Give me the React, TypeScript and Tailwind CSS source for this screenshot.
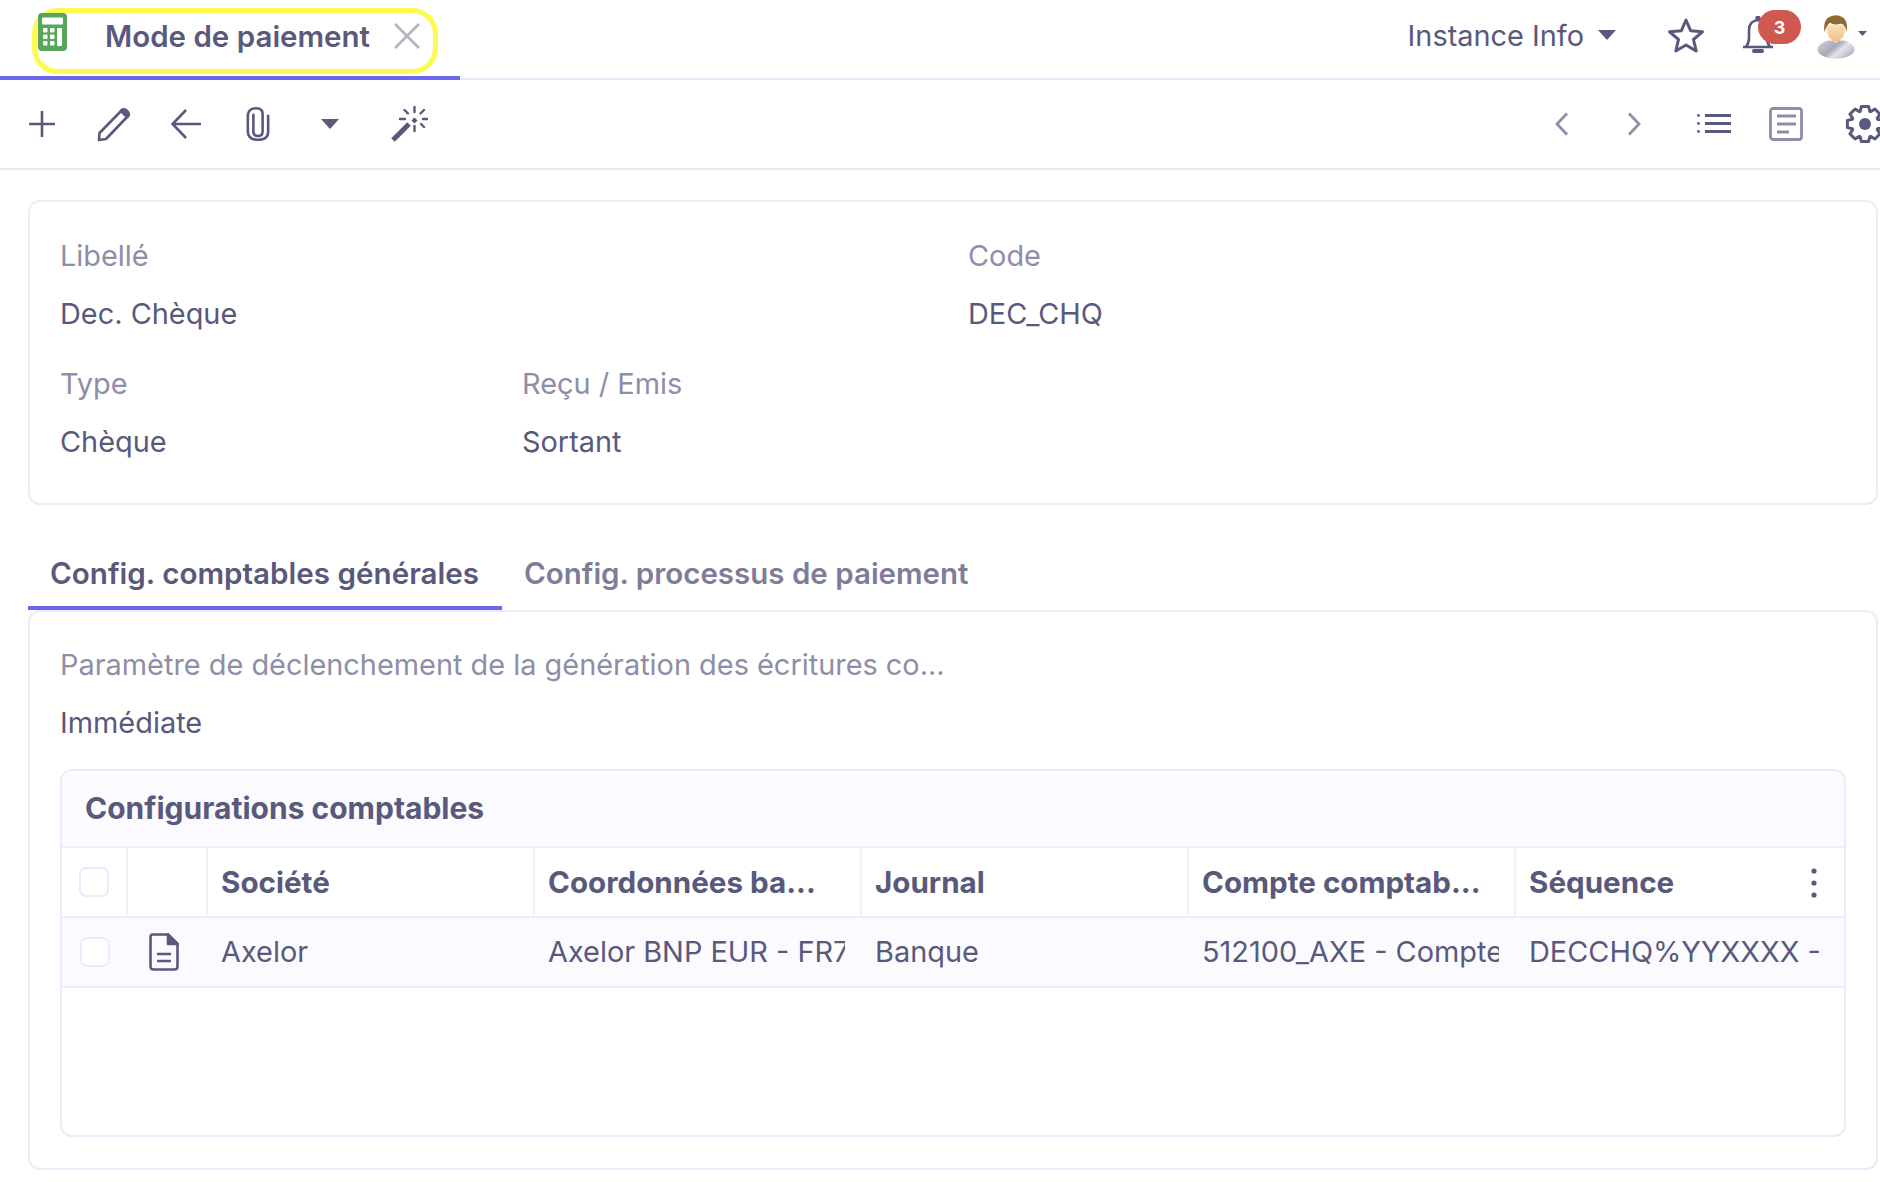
const ink = "#59597c";

function Calc() {
  return (
    <svg width="29" height="38" viewBox="0 0 29 38">
      <rect width="29" height="38" rx="4" fill="#58a55c" />
      <rect x="4" y="4.5" width="21" height="7" rx="1" fill="#fff" />
      {[15, 21.5, 28].map((y) =>
        [5, 12].map((x) => <rect key={`${x}${y}`} x={x} y={y} width="4.5" height="4.5" rx="1" fill="#fff" />)
      )}
      <rect x="19" y="15" width="5" height="18" rx="1" fill="#fff" />
    </svg>
  );
}

function Pencil() {
  return (
    <svg width="36" height="36" viewBox="0 0 36 36" fill="none" stroke={ink} strokeWidth="2.6" strokeLinejoin="round">
      <path d="M3 34 L3.5 27 L26 4 Q28 2.5 30 4 L32 6 Q33.5 8 32 10 L10 33 Z" />
      <path d="M26.5 3.5 L32.5 9.5 L31 11 L25 5 Z" fill={ink} />
    </svg>
  );
}

function Clip() {
  return (
    <svg width="24" height="38" viewBox="0 0 26 38" fill="none" stroke={ink} strokeWidth="2.8" strokeLinecap="round">
      <path d="M8 9 V27 Q8 32 13 32 Q18 32 18 27 V8 Q18 2 11 2 Q3 2 2 9 V27 Q2 36 13 36 Q24 36 24 27 V10" />
    </svg>
  );
}

function Wand() {
  return (
    <svg width="38" height="38" viewBox="0 0 38 38" fill="none" stroke={ink} strokeWidth="2.4" strokeLinecap="round">
      <path d="M3 35 L19 19" strokeWidth="5" strokeLinecap="butt" />
      <path d="M23 17 L26 14" strokeWidth="4.5" strokeLinecap="butt" />
      <path d="M24.5 2 V7 M24.5 21 V26 M10 14 H15 M33 14 H37 M14.5 5 L18 8.5 M34 5 L30.5 8.5 M31 19 L34 22" />
    </svg>
  );
}

function ListIcon() {
  return (
    <svg width="34" height="19" viewBox="0 0 34 19" fill={ink}>
      <rect x="8" y="0" width="26" height="3" />
      <rect x="8" y="8" width="26" height="3" />
      <rect x="8" y="16" width="26" height="3" />
      <circle cx="1.5" cy="1.5" r="1.4" />
      <circle cx="1.5" cy="9.5" r="1.4" />
      <circle cx="1.5" cy="17.5" r="1.4" />
    </svg>
  );
}

function NoteIcon() {
  return (
    <svg width="34" height="34" viewBox="0 0 34 34" fill="none" stroke="#8e8ea8" strokeWidth="2.8">
      <rect x="1.5" y="1.5" width="31" height="31" rx="2.5" />
      <path d="M8 9 H27 M8 17 H27 M8 25 H20" />
    </svg>
  );
}

function Chevron({ flip }: { flip?: boolean }) {
  return (
    <svg width="14" height="24" viewBox="0 0 14 24" fill="none" stroke="#8e8ea8" strokeWidth="2.8">
      <path d={flip ? "M2 1.5 L12 12 L2 22.5" : "M12 1.5 L2 12 L12 22.5"} />
    </svg>
  );
}

// teeth of the settings gear
function gearPath() {
  const pts: string[] = [];
  for (let i = 0; i < 8; i++) {
    const a = (i * Math.PI) / 4 - Math.PI / 2;
    const p = (r: number, d: number) =>
      `${(20 + r * Math.cos(a + d)).toFixed(1)} ${(20 + r * Math.sin(a + d)).toFixed(1)}`;
    pts.push(p(13.5, -0.36), p(18, -0.2), p(18, 0.2), p(13.5, 0.36));
  }
  return "M" + pts.join(" L") + " Z";
}

function Gear() {
  return (
    <svg width="40" height="40" viewBox="0 0 40 40" fill="none" stroke={ink} strokeWidth="3" strokeLinejoin="round">
      <path d={gearPath()} />
      <circle cx="20" cy="20" r="6" fill={ink} stroke="none" />
    </svg>
  );
}

function Avatar() {
  return (
    <svg width="38" height="44" viewBox="0 0 40 46">
      <defs>
        <linearGradient id="shirt" x1="0" y1="0" x2="1" y2="0.6">
          <stop offset="0" stopColor="#d6d6de" />
          <stop offset="0.5" stopColor="#a8a8b8" />
          <stop offset="0.7" stopColor="#e4e4ea" />
          <stop offset="1" stopColor="#b8b8c4" />
        </linearGradient>
        <linearGradient id="face" x1="0" y1="0" x2="0" y2="1">
          <stop offset="0" stopColor="#fbe0b8" />
          <stop offset="1" stopColor="#f2bf88" />
        </linearGradient>
      </defs>
      <ellipse cx="20" cy="36" rx="19.5" ry="10" fill="url(#shirt)" />
      <path d="M14 25 L20 29 L26 25 L26 27 L14 27 Z" fill="#fff" />
      <path d="M10 10 Q10 26 20 28 Q30 26 30 10 Z" fill="url(#face)" />
      <path d="M8 18 Q5 1 20 0 Q34 1 31 18 Q30 9 25 9 Q18 11 14 8 Q10 10 8 18 Z" fill="#8f6a2c" />
    </svg>
  );
}

function Caret({ w = 18, h = 10 }: { w?: number; h?: number }) {
  return (
    <svg width={w} height={h} viewBox="0 0 18 10" fill={ink}>
      <path d="M0 0 H18 L9 10 Z" />
    </svg>
  );
}

function Tool({ className, children }: { className?: string; children: React.ReactNode }) {
  return <div className={`flex items-center justify-center h-full ${className ?? "w-[72px]"}`}>{children}</div>;
}

function Field({ label, value, className }: { label: string; value: string; className?: string }) {
  return (
    <div className={className}>
      <div className="h-[58px] leading-[58px] text-[#8e8ea8] whitespace-nowrap">{label}</div>
      <div className="h-[58px] leading-[58px] whitespace-nowrap">{value}</div>
    </div>
  );
}

const headers = ["Société", "Coordonnées ba...", "Journal", "Compte comptab...", "Séquence"];
const cells = ["Axelor", "Axelor BNP EUR - FR76", "Banque", "512100_AXE - Compte", "DECCHQ%YYXXXX -"];

function Check() {
  return <div className="w-[30px] h-[30px] rounded-[7px] border-2 border-[#ebebfb] bg-white" />;
}

export default function App() {
  return (
    <div className="w-[1880px] h-[1182px] overflow-hidden bg-white text-[28.9px] text-[#59597c] font-['Inter',sans-serif]">
      {/* top bar */}
      <div className="flex justify-between h-[80px] border-b-2 border-[#e8e8f8]">
        <div className="w-[460px] h-[80px] border-b-4 border-[#6c66ee] pl-[32px] pt-[8px]">
          <div className="flex items-center w-[406px] h-[66px] border-[5px] border-[#fdfb52] rounded-[26px] pl-[1px]">
            <div className="-mt-[18px]">
              <Calc />
            </div>
            <span className="ml-[38px] font-semibold text-[29.5px] -mt-[10px] whitespace-nowrap">Mode de paiement</span>
            <svg className="ml-[24px] -mt-[10px]" width="26" height="26" viewBox="0 0 26 26" stroke="#b3b3c4" strokeWidth="2.6">
              <path d="M1 1 L25 25 M25 1 L1 25" />
            </svg>
          </div>
        </div>
        <div className="flex items-center pr-[13px] pb-[8px]">
          <span className="mt-[2px] whitespace-nowrap">Instance Info</span>
          <div className="ml-[14px]">
            <Caret />
          </div>
          <svg className="ml-[51px]" width="38" height="36" viewBox="0 0 38 36" fill="none" stroke={ink} strokeWidth="3" strokeLinejoin="round">
            <path d="M19 3 L23.6 13.7 L35.4 14.8 L26.5 22.5 L29.2 34 L19 28 L8.8 34 L11.5 22.5 L2.6 14.8 L14.4 13.7 Z" />
          </svg>
          <div className="relative ml-[37px] w-[59px] h-[46px]">
            <svg className="absolute left-0 top-[4px]" width="32" height="38" viewBox="0 0 32 38" fill="none" stroke={ink} strokeWidth="2.6">
              <path d="M1 31 H31 M4 31 Q7 27 7 22 V14 Q7 5 16 4 Q25 5 25 14 V22 Q25 27 28 31" />
              <path d="M12 35 H20" strokeWidth="4" strokeLinecap="round" />
              <circle cx="16" cy="2.5" r="1.5" fill={ink} />
            </svg>
            <div className="absolute left-[16px] top-[-2px] w-[43px] h-[34px] rounded-full bg-[#cf5850] text-white text-[18px] font-bold flex items-center justify-center">
              3
            </div>
          </div>
          <div className="ml-[16px] mt-[4px]">
            <Avatar />
          </div>
          <div className="ml-[3px] mt-[-4px]">
            <Caret w={9} h={5} />
          </div>
        </div>
      </div>

      {/* toolbar */}
      <div className="flex justify-between h-[90px] border-b-2 border-[#e8e8f8]">
        <div className="flex items-center pl-[6px]">
          <Tool>
            <svg width="28" height="28" viewBox="0 0 28 28" stroke={ink} strokeWidth="2.6">
              <path d="M14 1 V27 M1 14 H27" />
            </svg>
          </Tool>
          <Tool>
            <Pencil />
          </Tool>
          <Tool>
            <svg width="30" height="30" viewBox="0 0 30 30" fill="none" stroke={ink} strokeWidth="2.6">
              <path d="M30 15 H2 M15 1 L1.5 15 L15 29" />
            </svg>
          </Tool>
          <Tool>
            <Clip />
          </Tool>
          <Tool>
            <Caret />
          </Tool>
          <Tool className="w-[86px]">
            <Wand />
          </Tool>
        </div>
        <div className="flex items-center -mr-[5px]">
          <Chevron />
          <div className="ml-[58px]">
            <Chevron flip />
          </div>
          <div className="ml-[56px] -mt-[1px]">
            <ListIcon />
          </div>
          <div className="ml-[38px]">
            <NoteIcon />
          </div>
          <div className="ml-[42px]">
            <Gear />
          </div>
        </div>
      </div>

      <div className="w-[1850px] ml-[28px]">
        {/* record header */}
        <div className="mt-[30px] h-[305px] border-2 border-[#ebebfb] rounded-[12px] pt-[25px] pl-[30px]">
          <div className="flex">
            <Field label="Libellé" value="Dec. Chèque" className="w-[908px]" />
            <Field label="Code" value="DEC_CHQ" />
          </div>
          <div className="flex mt-[12px]">
            <Field label="Type" value="Chèque" className="w-[462px]" />
            <Field label="Reçu / Emis" value="Sortant" />
          </div>
        </div>

        {/* tabs */}
        <div className="flex h-[105px] pt-[38px]">
          <div className="h-[67px] w-[474px] pl-[22px] border-b-4 border-[#6c66ee] text-[29.6px] font-semibold leading-[60px] whitespace-nowrap">
            Config. comptables générales
          </div>
          <div className="h-[67px] pl-[22px] text-[29.5px] font-semibold leading-[60px] text-[#7d7d9a] whitespace-nowrap">
            Config. processus de paiement
          </div>
        </div>

        {/* tab body */}
        <div className="h-[560px] border-2 border-[#ebebfb] rounded-[12px] pt-[24px] px-[30px]">
          <Field label="Paramètre de déclenchement de la génération des écritures co..." value="Immédiate" />
          <div className="mt-[17px] w-[1786px] h-[368px] border-2 border-[#ebebfb] rounded-[12px] overflow-hidden">
            <div className="h-[77px] bg-[#fafaff] border-b-2 border-[#eeeefb] pl-[23px] leading-[75px] text-[30px] font-bold">
              Configurations comptables
            </div>
            <div className="flex h-[70px] border-b-2 border-[#eeeefb] text-[29.6px] font-bold">
              <div className="w-[66px] border-r-2 border-[#f1f1fc] flex items-center justify-center">
                <Check />
              </div>
              <div className="w-[80px] border-r-2 border-[#f1f1fc]" />
              {headers.map((h, i) => (
                <div
                  key={h}
                  className={`flex items-center justify-between pl-[13px] pt-[1px] whitespace-nowrap ${
                    i < 4 ? "w-[327px] border-r-2 border-[#f1f1fc]" : "flex-1 pr-[27px]"
                  }`}
                >
                  {h}
                  {i === 4 && (
                    <svg width="6" height="30" viewBox="0 0 6 30" fill={ink}>
                      <circle cx="3" cy="3" r="2.6" />
                      <circle cx="3" cy="15" r="2.6" />
                      <circle cx="3" cy="27" r="2.6" />
                    </svg>
                  )}
                </div>
              ))}
            </div>
            <div className="flex h-[70px] border-b-2 border-[#eeeefb] bg-[#fbfbff]">
              <div className="w-[66px] flex items-center justify-center">
                <Check />
              </div>
              <div className="w-[80px] flex items-center justify-center pr-[8px]">
                <svg width="30" height="38" viewBox="0 0 30 38" fill="none" stroke={ink} strokeWidth="2.6" strokeLinejoin="round">
                  <path d="M3.5 1.5 H19 L28.5 11 V33.5 Q28.5 36.5 25.5 36.5 H4.5 Q1.5 36.5 1.5 33.5 V4.5 Q1.5 1.5 3.5 1.5 Z" />
                  <path d="M19 1.5 L28.5 11 H19 Z" fill={ink} />
                  <path d="M8 21 H22 M8 28 H22" />
                </svg>
              </div>
              {cells.map((c, i) => (
                <div key={i} className="w-[327px] flex items-center pl-[13px] last:flex-1">
                  <span className="block w-[297px] overflow-hidden whitespace-nowrap">{c}</span>
                </div>
              ))}
            </div>
          </div>
        </div>
      </div>
    </div>
  );
}
